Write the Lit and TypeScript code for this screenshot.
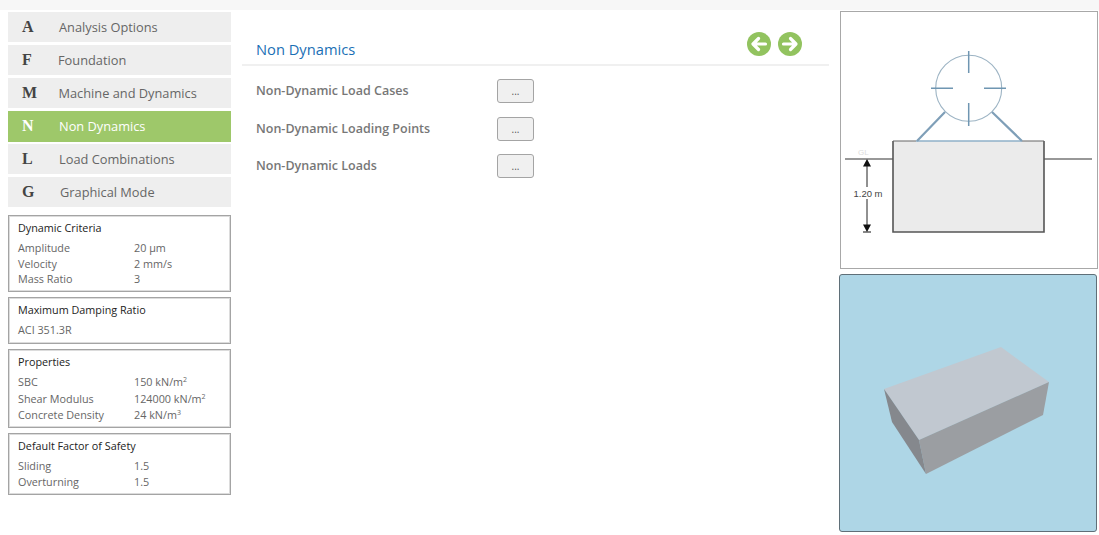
import { LitElement, html, css, svg } from "lit";
import { customElement } from "lit/decorators.js";

const menu = [
  { k: "A", t: "Analysis Options", o: 0 },
  { k: "F", t: "Foundation", o: -1 },
  { k: "M", t: "Machine and Dynamics", o: -0.5 },
  { k: "N", t: "Non Dynamics", o: 0 },
  { k: "L", t: "Load Combinations", o: 0 },
  { k: "G", t: "Graphical Mode", o: 1 },
].map((m) => ({ ...m, active: m.k === "N" }));

const sq = html`<sup>2</sup>`;
const cu = html`<sup>3</sup>`;
const panels: any[] = [
  { title: "Dynamic Criteria", h: 77, lh: 15.7, rows: [["Amplitude", "20 µm"], ["Velocity", "2 mm/s"], ["Mass Ratio", "3"]] },
  { title: "Maximum Damping Ratio", h: 47, lh: 15.7, rows: [["ACI 351.3R", ""]] },
  { title: "Properties", h: 79, lh: 16.6, rows: [["SBC", html`150 kN/m${sq}`], ["Shear Modulus", html`124000 kN/m${sq}`], ["Concrete Density", html`24 kN/m${cu}`]] },
  { title: "Default Factor of Safety", h: 62, lh: 16, rows: [["Sliding", "1.5"], ["Overturning", "1.5"]] },
];

const loads = ["Non-Dynamic Load Cases", "Non-Dynamic Loading Points", "Non-Dynamic Loads"];

const arrow = (dir: number) => html`<svg class="nav" viewBox="0 0 24 24" width="24" height="24">
  <circle cx="12" cy="12" r="12" fill="#92c35f"></circle>
  <g transform=${dir < 0 ? "" : "rotate(180 12 12)"} fill="none" stroke="#fff" stroke-width="3.2" stroke-linecap="round" stroke-linejoin="round">
    <path d="M18.5 12H6.5M11.5 6.5L6 12l5.500 5.500"></path>
  </g>
</svg>`;

const diagram = svg`
  <rect x="53" y="130" width="151" height="91" fill="#ebebeb"></rect>
  <path d="M5 148H53M204 148H252" stroke="#777" stroke-width="1.3" fill="none"></path>
  <path d="M53 130V221H204V130" stroke="#555" stroke-width="1.6" fill="none"></path>
  <path d="M53 130H76M182 130H204" stroke="#666" stroke-width="1.2" fill="none"></path>
  <path d="M76 130H182" stroke="#8fb0c8" stroke-width="1.4" fill="none"></path>
  <circle cx="128.700" cy="77.300" r="33" fill="#fff" stroke="#9db4c4" stroke-width="1.1"></circle>
  <path d="M128.700 40V62M128.700 92V115M91 77.300H113M144 77.300H166" stroke="#6f96b2" stroke-width="1.5" fill="none"></path>
  <path d="M105 101L77 130M152 101L182 130" stroke="#7f9fb8" stroke-width="2.2" fill="none"></path>
  <path d="M27 155V176M27 188V215" stroke="#222" stroke-width="1"></path>
  <path d="M27 148L23 155.500H31ZM27 221L23 213.500H31Z" fill="#111"></path>
  <path d="M23 221H31" stroke="#111" stroke-width="1"></path>
  <text x="28" y="185.500" class="dim">1.20 m</text>
  <text x="18" y="144" class="gl">GL</text>
`;

const solid = svg`
  <polygon points="45,115 162,73 210,108 80,166" fill="#c1c8d0"></polygon>
  <polygon points="80,166 210,108 204,141 87,200" fill="#9b9ea2"></polygon>
  <polygon points="45,115 80,166 87,200 53,148" fill="#85888d"></polygon>
`;

@customElement("app-root")
export class AppRoot extends LitElement {
  static styles = css`
    :host { display: block; width: 1099px; height: 535px; overflow: hidden; background: #fff; font-family: "Open Sans", "Noto Sans", sans-serif; }
    .top { height: 10px; background: #f7f7f7; }
    .page { display: flex; align-items: flex-start; padding-top: 2px; }
    .side { width: 223px; margin-left: 8px; flex: none; }
    .item { display: flex; align-items: center; height: 30px; margin-bottom: 3px; padding-left: 14px; padding-bottom: 1px; background: #eeeeee; color: #666; font-size: 12.800px; box-sizing: border-box; }
    .item.active { background: #9ec86a; color: #fff; height: 31px; margin-bottom: 2px; padding-bottom: 2px; }
    .key { width: 37px; flex: none; font-family: "Liberation Serif", serif; font-weight: 700; font-size: 16px; color: #444; }
    .active .key { color: #fff; }
    .panels { display: flex; flex-direction: column; gap: 5px; margin-top: 8px; }
    .panel { box-sizing: border-box; border: 1px solid #a4a4a4; box-shadow: inset 0 0 0 1px #dcdcdc; padding: 4px 9px 0; font-size: 10.800px; color: #666; }
    .panel h3 { margin: 0 0 4px; font-weight: 400; font-size: 10.800px; line-height: 16px; color: #222; }
    .row { display: flex; }
    .row .l { width: 116px; flex: none; }
    sup { font-size: 7px; line-height: 0; vertical-align: 4px; }
    .main { width: 587px; margin-left: 11px; flex: none; }
    .head { display: flex; align-items: center; justify-content: space-between; height: 41px; margin-top: 11px; padding: 0 27px 0 14px; border-bottom: 2px solid #f0f0f0; box-sizing: content-box; }
    .head h2 { margin: 0; padding-top: 10px; font-weight: 400; font-size: 14.700px; color: #1a6fb5; }
    .navs { display: flex; gap: 7px; padding-bottom: 0; }
    .nav { display: block; }
    .rows { padding: 13px 0 0 14px; display: flex; flex-direction: column; gap: 13.500px; }
    .lrow { display: flex; align-items: center; height: 24px; font-size: 12.500px; font-weight: 600; color: #777; }
    .lrow span { width: 241px; flex: none; margin-top: -1px; }
    button { width: 37px; height: 24px; padding: 0; box-sizing: border-box; border: 1px solid #a4a4a4; border-radius: 3px; background: #f0f0f0; color: #555; font: 10px "Open Sans", sans-serif; }
    .right { margin-left: 11px; width: 258px; flex: none; display: flex; flex-direction: column; gap: 5px; margin-top: -1px; }
    .sketch { width: 258px; height: 258px; box-sizing: border-box; border: 1px solid #a8a8a8; background: #fff; display: block; }
    .view { width: 258px; height: 258px; box-sizing: border-box; border: 1px solid #5f6f78; border-radius: 3px; background: #aed6e6; display: block; margin-left: -1px; }
    .dim { font: 9.500px "Liberation Sans", sans-serif; fill: #444; text-anchor: middle; }
    .gl { font: 8px "Liberation Sans", sans-serif; fill: #ddd; }
  `;

  render() {
    return html`
      <div class="top"></div>
      <div class="page">
        <div class="side">
          ${menu.map((m) => html`
            <div class="item ${m.active ? "active" : ""}">
              <span class="key">${m.k}</span>
              <span style="margin-left:${m.o}px">${m.t}</span>
            </div>`)}
          <div class="panels">
            ${panels.map((p) => html`
              <div class="panel" style="height:${p.h}px;line-height:${p.lh}px">
                <h3>${p.title}</h3>
                ${p.rows.map((r: any[]) => html`<div class="row"><span class="l">${r[0]}</span><span>${r[1]}</span></div>`)}
              </div>`)}
          </div>
        </div>
        <div class="main">
          <div class="head">
            <h2>Non Dynamics</h2>
            <div class="navs">${arrow(-1)}${arrow(1)}</div>
          </div>
          <div class="rows">
            ${loads.map((l) => html`<div class="lrow"><span>${l}</span><button>...</button></div>`)}
          </div>
        </div>
        <div class="right">
          <svg class="sketch" viewBox="1 1 256 256">${diagram}</svg>
          <svg class="view" viewBox="1 1 256 256">${solid}</svg>
        </div>
      </div>
    `;
  }
}
